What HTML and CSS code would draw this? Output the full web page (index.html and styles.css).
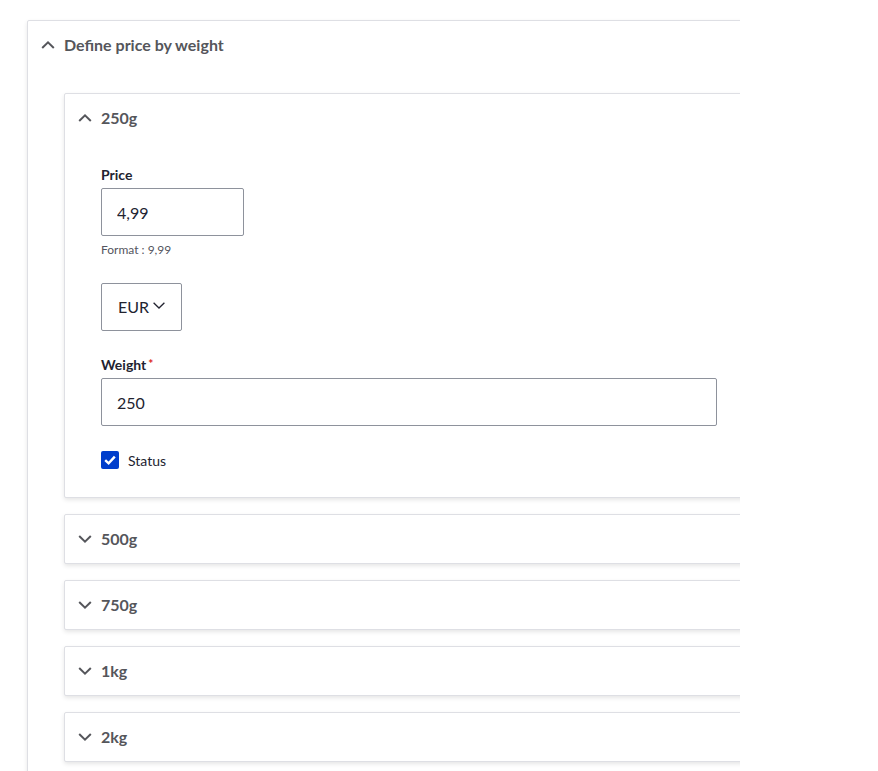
FILE: index.html
```html
<!DOCTYPE html>
<html lang="en">
<head>
<meta charset="utf-8">
<title>Define price by weight</title>
<link rel="stylesheet" href="styles.css">
</head>
<body>
<div class="page">
  <details class="details outer" open>
    <summary class="summary">
      <svg class="chev" viewBox="0 0 14 8" width="14" height="8"><path d="M1.2 7 L7 1.4 L12.8 7" fill="none" stroke="currentColor" stroke-width="2"/></svg>
      <span>Define price by weight</span>
    </summary>
    <div class="outer-body">
      <details class="details inner" open>
        <summary class="summary">
          <svg class="chev" viewBox="0 0 14 8" width="14" height="8"><path d="M1.2 7 L7 1.4 L12.8 7" fill="none" stroke="currentColor" stroke-width="2"/></svg>
          <span>250g</span>
        </summary>
        <div class="inner-body">
          <div class="form-item">
            <label class="label" for="price">Price</label>
            <input class="input price" id="price" type="text" value="4,99">
            <div class="desc">Format : 9,99</div>
          </div>
          <div class="form-item">
            <div class="select">
              <span>EUR</span>
              <svg viewBox="0 0 12 7" width="12" height="7"><path d="M0.6 0.8 L6 6 L11.4 0.8" fill="none" stroke="currentColor" stroke-width="1.3"/></svg>
            </div>
          </div>
          <div class="form-item">
            <label class="label" for="weight">Weight<span class="req">*</span></label>
            <input class="input weight" id="weight" type="text" value="250">
          </div>
          <div class="form-item check-item">
            <span class="checkbox"><svg viewBox="0 0 18 18" width="18" height="18"><path d="M4.2 9.2 L7.6 12.4 L13.8 5.6" fill="none" stroke="#fff" stroke-width="2.4"/></svg></span>
            <span class="check-label">Status</span>
          </div>
        </div>
      </details>
      <details class="details inner">
        <summary class="summary">
          <svg class="chev" viewBox="0 0 14 8" width="14" height="8"><path d="M1.2 1 L7 6.6 L12.8 1" fill="none" stroke="currentColor" stroke-width="2"/></svg>
          <span>500g</span>
        </summary>
      </details>
      <details class="details inner">
        <summary class="summary">
          <svg class="chev" viewBox="0 0 14 8" width="14" height="8"><path d="M1.2 1 L7 6.6 L12.8 1" fill="none" stroke="currentColor" stroke-width="2"/></svg>
          <span>750g</span>
        </summary>
      </details>
      <details class="details inner">
        <summary class="summary">
          <svg class="chev" viewBox="0 0 14 8" width="14" height="8"><path d="M1.2 1 L7 6.6 L12.8 1" fill="none" stroke="currentColor" stroke-width="2"/></svg>
          <span>1kg</span>
        </summary>
      </details>
      <details class="details inner">
        <summary class="summary">
          <svg class="chev" viewBox="0 0 14 8" width="14" height="8"><path d="M1.2 1 L7 6.6 L12.8 1" fill="none" stroke="currentColor" stroke-width="2"/></svg>
          <span>2kg</span>
        </summary>
      </details>
    </div>
  </details>
</div>
</body>
</html>
```
FILE: styles.css
```css
* { box-sizing: border-box; }
html, body { margin: 0; padding: 0; background: #fff; }
body {
  font-family: Lato, "Liberation Sans", sans-serif;
  color: #222330;
  height: 771px;
  overflow: hidden;
}
.page {
  width: 740px;
  overflow: hidden;
  padding: 20px 0 0 27px;
}
.details {
  border: 1px solid #dedfe4;
  border-radius: 2px;
  background: #fff;
  box-shadow: 0 2px 4px rgba(0, 0, 0, 0.1);
}
.outer { width: 764px; }
.summary {
  list-style: none;
  display: flex;
  align-items: center;
  height: 48px;
  padding-left: 13px;
  padding-bottom: 2px;
  font-size: 16px;
  font-weight: 700;
  color: #55565b;
  cursor: pointer;
}
.summary::-webkit-details-marker { display: none; }
.chev { flex: none; margin-right: 9px; margin-top: 1px; }
.outer-body { padding: 24px 36px 0 36px; }
.inner { margin-bottom: 16px; }
.inner-body { padding: 24px 36px 25px 36px; }
.form-item { margin-bottom: 24px; }
.form-item:last-child { margin-bottom: 0; }
.label {
  display: block;
  font-size: 14px;
  font-weight: 700;
  line-height: 18px;
  margin-bottom: 4px;
  color: #222330;
}
.req {
  color: #dc2323;
  font-size: 12px;
  margin-left: 2px;
  vertical-align: 2px;
}
.input {
  display: block;
  height: 48px;
  border: 1px solid #8e929c;
  border-radius: 2px;
  padding: 0 15px;
  font-family: inherit;
  font-size: 16px;
  color: #222330;
  background: #fff;
}
.price { width: 143px; }
.weight { width: 616px; }
.desc {
  font-size: 12px;
  line-height: 15px;
  margin-top: 6px;
  color: #545560;
  height: 17px;
}
.select {
  display: inline-flex;
  align-items: center;
  width: 81px;
  height: 48px;
  border: 1px solid #8e929c;
  border-radius: 2px;
  padding-left: 16px;
  padding-bottom: 2px;
  font-size: 16px;
  color: #222330;
}
.select svg { margin-left: 4px; margin-top: -2px; }
.check-item {
  display: flex;
  align-items: center;
  height: 24px;
  margin-top: -2px;
}
.checkbox {
  width: 18px;
  height: 18px;
  border-radius: 2px;
  background: #003ecc;
  display: inline-flex;
}
.check-label {
  margin-left: 9px;
  font-size: 14px;
  color: #222330;
}
```
